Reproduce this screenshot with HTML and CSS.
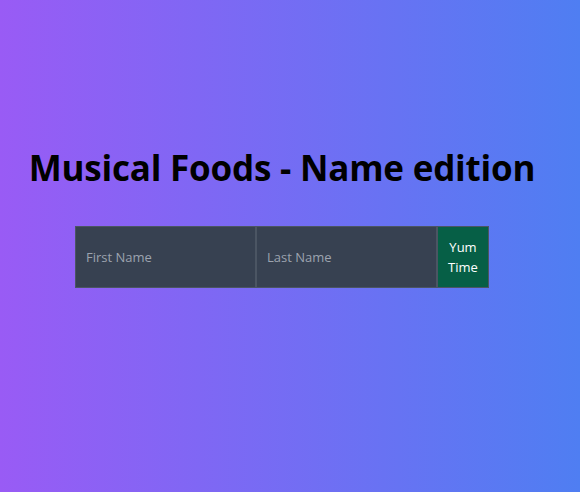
FILE: index.html
```html
<!DOCTYPE html>
<html>
<head>
<meta charset="utf-8">
<link rel="stylesheet" href="styles.css">
</head>
<body>
<main class="page">
  <h1 class="title">Musical Foods - Name edition</h1>
  <form class="name-form">
    <input class="field" type="text" placeholder="First Name">
    <input class="field" type="text" placeholder="Last Name">
    <button class="go" type="button">Yum Time</button>
  </form>
</main>
</body>
</html>
```
FILE: styles.css
```css
html, body {
  margin: 0;
  padding: 0;
  height: 100%;
}
body {
  background: linear-gradient(to right, #995bf5, #4f7ef2);
  font-family: "Open Sans", "Noto Sans", sans-serif;
}
.page {
  box-sizing: border-box;
  width: 564px;
  height: 100%;
  display: flex;
  flex-direction: column;
  align-items: center;
  padding-top: 146px;
}
.title {
  margin: 0;
  font-size: 35px;
  font-weight: 700;
  line-height: 44px;
  color: #000;
  letter-spacing: -0.2px;
}
.name-form {
  display: flex;
  margin-top: 36px;
  height: 62px;
}
.field {
  box-sizing: border-box;
  width: 181px;
  height: 62px;
  margin: 0;
  padding: 0 10px;
  background: #374151;
  border: 1px solid #4b5563;
  color: #e5e7eb;
  font-family: inherit;
  font-size: 13px;
  outline: none;
}
.field::placeholder {
  color: #9ca3af;
}
.go {
  box-sizing: border-box;
  width: 52px;
  height: 62px;
  margin: 0;
  padding: 0 6px;
  background: #065f46;
  border: 1px solid #4b5563;
  color: #fff;
  font-family: inherit;
  font-size: 13px;
  line-height: 20px;
}
```
